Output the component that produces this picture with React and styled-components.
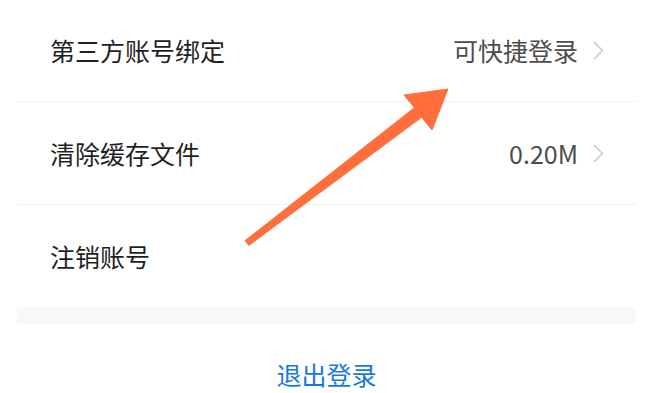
import React from "react";
import styled, { createGlobalStyle } from "styled-components";

const GlobalStyle = createGlobalStyle`
  html, body {
    margin: 0;
    padding: 0;
    background: #ffffff;
    overflow: hidden;
  }
  body {
    font-family: "Noto Sans CJK SC", "Noto Sans", sans-serif;
  }
`;

const settings = [
  { label: "第三方账号绑定", value: "可快捷登录", arrow: true },
  { label: "清除缓存文件", value: "0.20M", arrow: true },
  { label: "注销账号" },
];

function Chevron() {
  return (
    <svg width="11" height="19" viewBox="0 0 11 19">
      <path
        d="M1.5 1.5 L9.5 9.5 L1.5 17.5"
        fill="none"
        stroke="#c9c9c9"
        strokeWidth="1.6"
        strokeLinecap="round"
        strokeLinejoin="round"
      />
    </svg>
  );
}

function App() {
  return (
    <Page>
      <GlobalStyle />
      <List>
        {settings.map((item, i) => (
          <Row key={item.label} $last={i === settings.length - 1}>
            <Label>{item.label}</Label>
            {item.value && (
              <Extra>
                <Value>{item.value}</Value>
                {item.arrow && <Chevron />}
              </Extra>
            )}
          </Row>
        ))}
      </List>
      <Band />
      <Logout>退出登录</Logout>

      <Pointer width="668" height="393" viewBox="0 0 668 393">
        <polygon
          points="245.2,240.6 414.4,107.7 404,95 448,89 432,130 421.6,117.3 248.8,245.4"
          fill="#ff6e3b"
          stroke="#ff6e3b"
          strokeWidth="1"
          strokeLinejoin="round"
        />
      </Pointer>
    </Page>
  );
}

const Page = styled.div`
  position: relative;
  width: 668px;
  height: 393px;
  overflow: hidden;
  background: #ffffff;
`;

const List = styled.div`
  margin: -1px 32px 0 17px;
  display: flex;
  flex-direction: column;
`;

const Row = styled.div`
  display: flex;
  align-items: center;
  justify-content: space-between;
  height: 102px;
  padding: 0 32px 0 33px;
  border-bottom: ${(p) => (p.$last ? "none" : "1px solid #f1f1f1")};
`;

const Label = styled.span`
  font-size: 25px;
  color: #1f1f1f;
`;

const Extra = styled.div`
  display: flex;
  align-items: center;
  gap: 15px;
`;

const Value = styled.span`
  font-size: 25px;
  color: #4d4d4d;
`;

const Band = styled.div`
  margin: 0 32px 0 17px;
  height: 17px;
  background: #f8f8f8;
`;

const Logout = styled.div`
  display: flex;
  align-items: center;
  justify-content: center;
  margin: 0 32px 0 17px;
  height: 100px;
  font-size: 25px;
  color: #1779e0;
`;

const Pointer = styled.svg`
  position: absolute;
  left: 0;
  top: 0;
  pointer-events: none;
`;

export default App;
